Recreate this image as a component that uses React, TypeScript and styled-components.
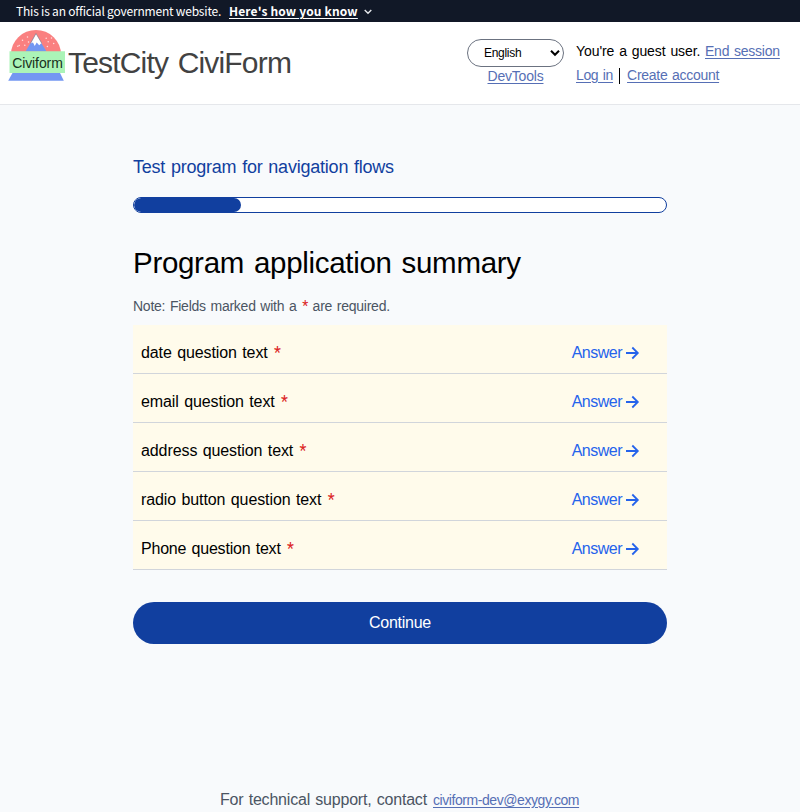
import React from "react";
import styled, { createGlobalStyle, css } from "styled-components";

const blue = "#113f9f";
const link = "#566fb5";
const ink = "#000000";
const muted = "#4b5563";

const GlobalStyle = createGlobalStyle`
  *, *::before, *::after { box-sizing: border-box; }
  body {
    margin: 0;
    background: #f8fafc;
    color: ${ink};
    font-family: "Liberation Sans", Arial, sans-serif;
    font-size: 16px;
    line-height: 24px;
    overflow: hidden;
  }
  h1, h2, p, ul { margin: 0; padding: 0; font-weight: 400; }
`;

type Spacing = { $track?: number; $words?: number };
const spacing = css<Spacing>`
  letter-spacing: ${({ $track = 0 }) => $track}px;
  word-spacing: ${({ $words = 0 }) => $words}px;
  white-space: nowrap;
`;

const Page = styled.div`
  height: 812px;
  display: flex;
  flex-direction: column;
  overflow: hidden;
`;

const Banner = styled.div`
  flex: none;
  height: 22px;
  padding: 0 16px;
  display: flex;
  align-items: center;
  background: #111827;
  color: #fff;
  font: 12px/22px "Noto Sans CJK JP", "Open Sans", sans-serif;
`;

const BannerText = styled.span<Spacing>`
  ${spacing}
  width: 213px;
`;

const BannerLink = styled.a<Spacing>`
  ${spacing}
  width: 129px;
  font-weight: 700;
  text-decoration: underline;
  text-underline-offset: 2px;
  margin-right: 6px;
`;

const Header = styled.header`
  flex: none;
  height: 83px;
  display: flex;
  background: #fff;
  border-bottom: 1px solid #e5e7eb;
`;

const Brand = styled.div`
  display: flex;
  flex: 1;
  padding: 7px 0 0 8px;
`;

const BrandName = styled.span<Spacing>`
  ${spacing}
  color: #424242;
  font-size: 30px;
  line-height: 40px;
  margin: 14px 0 0 2px;
`;

const LanguageColumn = styled.div`
  width: 97px;
  padding-top: 17px;
  margin-right: 12px;
  display: flex;
  flex-direction: column;
  align-items: center;
`;

const LanguageSelect = styled.div`
  width: 97px;
  height: 28px;
  padding: 0 3px 0 16px;
  display: flex;
  align-items: center;
  justify-content: space-between;
  border: 1px solid #6b7280;
  border-radius: 14px;
  font-size: 12px;
  line-height: 26px;
`;

const Label = styled.span<Spacing>`
  ${spacing}
`;

const Link = styled.a<Spacing>`
  ${spacing}
  color: ${link};
  font-size: 14px;
  line-height: 19px;
  text-decoration: underline;
  text-decoration-thickness: 1px;
  text-underline-offset: 2px;
`;

const SessionColumn = styled.div`
  width: 224px;
  padding-top: 17px;
  font-size: 14px;
`;

const SessionRow = styled.div`
  height: 24px;
  display: flex;
  align-items: center;
`;

const GuestText = styled.span<Spacing>`
  ${spacing}
  width: 129px;
`;

const Divider = styled.span`
  position: relative;
  top: 1px;
  width: 1px;
  height: 16px;
  margin: 0 7px 0 6px;
  background: ${ink};
`;

const Main = styled.main`
  width: 534px;
  margin: 50px 0 0 133px;
  flex: 1;
`;

const ProgramTitle = styled.h2<Spacing>`
  ${spacing}
  color: ${blue};
  font-size: 18px;
  line-height: 24px;
`;

const Progress = styled.div`
  height: 16px;
  margin-top: 18px;
  border: 1px solid ${blue};
  border-radius: 8px;
  background: #fff;
  overflow: hidden;
`;

const ProgressFill = styled.div`
  width: 20.1%;
  height: 100%;
  border-radius: 7px;
  background: ${blue};
`;

const Heading = styled.h1<Spacing>`
  ${spacing}
  margin-top: 30px;
  font-size: 29.5px;
  line-height: 40px;
`;

const Note = styled.p<Spacing>`
  ${spacing}
  margin-top: 14px;
  color: ${muted};
  font-size: 14px;
  line-height: 19px;
`;

const Star = styled.span`
  margin-left: 1px;
  color: #dc2626;
  font-family: Roboto, "Liberation Sans", sans-serif;
`;

const List = styled.ul`
  margin-top: 9px;
  list-style: none;
`;

const Question = styled.li`
  height: 49px;
  padding: 7px 27px 0 8px;
  display: flex;
  align-items: center;
  justify-content: space-between;
  background: #fffbeb;
  border-bottom: 1px solid #d1d5db;
`;

const Answer = styled.a`
  display: flex;
  align-items: center;
  gap: 2px;
  color: #2563eb;
`;

const ContinueButton = styled.button<Spacing>`
  ${spacing}
  width: 100%;
  height: 42px;
  margin-top: 32px;
  padding: 0;
  border: 0;
  border-radius: 21px;
  background: ${blue};
  color: #fff;
  font: 16px/24px "Liberation Sans", Arial, sans-serif;
`;

const Footer = styled.footer`
  flex: none;
  height: 24px;
  display: flex;
  align-items: center;
  padding-left: 220px;
  color: ${muted};
`;

const SupportText = styled.span<Spacing>`
  ${spacing}
  width: 213px;
`;

const LogoImage = styled.svg`
  flex: none;
`;

const LogoText = styled.text`
  font: 14px "Liberation Sans", Arial, sans-serif;
  letter-spacing: -0.1px;
  fill: #183020;
`;

const logoDots = [
  [22.5, 40.2], [27.5, 37], [28.5, 42], [19.2, 45.5], [17.8, 46.2], [24.8, 45.2],
  [46.2, 38.2], [51.5, 38], [48.2, 41.8], [53.7, 43.5], [47.4, 46.5],
];

const Logo = () => (
  <LogoImage width="58" height="53" viewBox="8 29 58 53">
    <path d="M11 54.5a25 24.5 0 0 1 50 0z" fill="#fa8080" />
    <path d="M25.5 51.5 L35.8 34 L46.5 51.5z" fill="#7397f2" />
    <path d="M36 33.5 L30.5 43.5 L33 42.4 L34.7 46 L36.7 42.5 L39.2 45.3 L41.6 43z" fill="#fff" />
    <path d="M30.5 43.5 L36 33.5 L41.6 43" fill="none" stroke="#77717d" strokeWidth=".6" />
    <g fill="#ffe0e0">
      {logoDots.map(([x, y]) => <circle key={x} cx={x} cy={y} r=".75" />)}
    </g>
    <path d="M12.5 73 H60 L63.8 80.8 H8.2z" fill="#7397f2" />
    <path d="M9.5 51.3H65V73H9.5z" fill="#abf4b7" />
    <LogoText x="12.2" y="68">Civiform</LogoText>
  </LogoImage>
);

const ArrowIcon = () => (
  <svg width="16" height="16" viewBox="0 0 16 16" fill="none" stroke="currentColor" strokeWidth="1.8">
    <path d="M2 8h11.5M8.3 2.5 13.8 8 8.3 13.5" />
  </svg>
);

const BannerChevron = () => (
  <svg width="8" height="8" viewBox="0 0 8 8" fill="none" stroke="#e5e7eb" strokeWidth="1.4">
    <path d="m.7 3 3.3 3.3L7.3 3" />
  </svg>
);

const SelectChevron = () => (
  <svg width="10" height="8" viewBox="0 0 10 8" fill="none" stroke="#000" strokeWidth="2">
    <path d="m1 1.8 4 4 4-4" />
  </svg>
);

const questions = [
  { text: "date question text", track: -0.09 },
  { text: "email question text", track: -0.09 },
  { text: "address question text", track: -0.09 },
  { text: "radio button question text", track: -0.09 },
  { text: "Phone question text", track: -0.2 },
];

export default function App() {
  return (
    <Page>
      <GlobalStyle />
      <Banner>
        <BannerText $track={-0.2}>This is an official government website.</BannerText>
        <BannerLink $track={0.15}>Here's how you know</BannerLink>
        <BannerChevron />
      </Banner>
      <Header>
        <Brand>
          <Logo />
          <BrandName $track={-0.82} $words={2}>TestCity CiviForm</BrandName>
        </Brand>
        <LanguageColumn>
          <LanguageSelect>
            <Label $track={-0.3}>English</Label>
            <SelectChevron />
          </LanguageSelect>
          <Link $track={-0.2}>DevTools</Link>
        </LanguageColumn>
        <SessionColumn>
          <SessionRow>
            <GuestText $track={-0.07} $words={1}>You're a guest user.</GuestText>
            <Link $track={-0.22} $words={1}>End session</Link>
          </SessionRow>
          <SessionRow>
            <Link $track={-0.35} $words={1}>Log in</Link>
            <Divider />
            <Link $track={-0.28} $words={1}>Create account</Link>
          </SessionRow>
        </SessionColumn>
      </Header>
      <Main>
        <ProgramTitle $track={-0.22} $words={1}>Test program for navigation flows</ProgramTitle>
        <Progress><ProgressFill /></Progress>
        <Heading $track={-0.3} $words={2}>Program application summary</Heading>
        <Note $track={-0.24} $words={1}>Note: Fields marked with a <Star>*</Star> are required.</Note>
        <List>
          {questions.map(({ text, track }) => (
            <Question key={text}>
              <Label $track={track} $words={1}>{text} <Star>*</Star></Label>
              <Answer><Label $track={-0.5}>Answer</Label><ArrowIcon /></Answer>
            </Question>
          ))}
        </List>
        <ContinueButton $track={-0.25}>Continue</ContinueButton>
      </Main>
      <Footer>
        <SupportText $track={-0.2} $words={1}>For technical support, contact</SupportText>
        <Link $track={-0.43}>civiform-dev@exygy.com</Link>
      </Footer>
    </Page>
  );
}
